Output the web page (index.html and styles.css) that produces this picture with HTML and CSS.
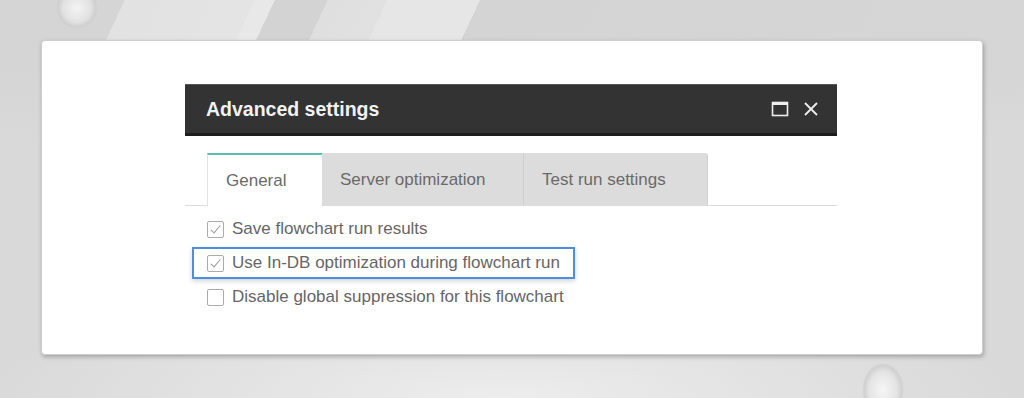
FILE: index.html
```html
<!DOCTYPE html>
<html lang="en">
<head>
  <meta charset="UTF-8" />
  <meta name="viewport" content="width=device-width, initial-scale=1.0"/>
  <title>Advanced settings</title>
  <link rel="stylesheet" href="styles.css">
</head>
<body>

  <div class="card">
    <div class="dialog">
      <div class="dialog-header">
        <h1>Advanced settings</h1>
        <div class="header-icons">
          <svg class="icon" width="18" height="16" viewBox="0 0 18 16">
            <rect x="1.5" y="1.5" width="15" height="13" fill="none" stroke="#eee" stroke-width="1.6"/>
            <rect x="1" y="1" width="16" height="3" fill="#eee"/>
          </svg>
          <svg class="icon" width="16" height="16" viewBox="0 0 16 16">
            <path d="M2 2 L14 14 M14 2 L2 14" stroke="#eee" stroke-width="1.8" fill="none"/>
          </svg>
        </div>
      </div>

      <div class="tabs">
        <div class="tab active">General</div>
        <div class="tab">Server optimization</div>
        <div class="tab">Test run settings</div>
      </div>

      <div class="options">
        <label class="option">
          <span class="box checked"></span>
          Save flowchart run results
        </label>
        <label class="option highlight">
          <span class="box checked"></span>
          Use In-DB optimization during flowchart run
        </label>
        <label class="option">
          <span class="box"></span>
          Disable global suppression for this flowchart
        </label>
      </div>
    </div>
  </div>

</body>
</html>
```

FILE: styles.css
```css
html, body {
  height: 100%;
}

body {
  margin: 0;
  font-family: "Liberation Sans", Arial, sans-serif;
  overflow: hidden;
  background:
    radial-gradient(circle at 77px 8px, #f4f4f4 0, #e2e2e2 14px, #cfcfcf 19px, rgba(210,210,210,0) 21px),
    radial-gradient(ellipse 20px 26px at 883px 390px, #f6f6f6 0, #e4e4e4 14px, #d0d0d0 19px, rgba(210,210,210,0) 21px),
    radial-gradient(ellipse 520px 120px at 500px 398px, rgba(238,238,238,0.95), rgba(238,238,238,0)),
    linear-gradient(to bottom, rgba(216,216,216,0) 0, rgba(216,216,216,0) 70px, #d9d9d9 140px),
    linear-gradient(115deg,
      #d5d5d5 0, #d5d5d5 113px,
      #e2e2e2 113px, #e4e4e4 231px,
      #e8e8e8 231px, #e8e8e8 249px,
      #d3d3d3 249px, #d3d3d3 297px,
      #dfdfdf 297px, #e1e1e1 351px,
      #e6e6e6 351px, #e6e6e6 435px,
      #d4d4d4 435px, #d6d6d6 100%);
}

.card {
  margin: 40px 0 0 41px;
  width: 942px;
  height: 315px;
  box-sizing: border-box;
  background: #fff;
  border-radius: 4px;
  border: 1px solid #cdcdcd;
  box-shadow: 1px 2px 4px rgba(0, 0, 0, 0.25);
  padding: 43px 0 0 143px;
}

.dialog {
  width: 652px;
}

.dialog-header {
  height: 52px;
  box-sizing: border-box;
  background: #333;
  border-top: 1px solid #555;
  border-bottom: 3px solid #1d1d1d;
  display: flex;
  align-items: center;
  justify-content: space-between;
  padding: 0 18px 0 21px;
}

.dialog-header h1 {
  margin: 0;
  color: #f2f2f2;
  font-size: 19.5px;
  font-weight: bold;
}

.header-icons {
  display: flex;
  align-items: center;
  gap: 14px;
}

.icon {
  display: block;
}

.tabs {
  display: flex;
  margin-top: 17px;
  padding-left: 22px;
  border-bottom: 1px solid #dcdcdc;
}

.tab {
  height: 52px;
  box-sizing: border-box;
  display: flex;
  align-items: center;
  font-size: 17px;
  color: #6a6a6a;
  background: #dcdcdc;
  border-top: 2px solid #dcdcdc;
  border-right: 1px solid #cfcfcf;
  padding: 0 18px;
}

.tab:nth-child(2) {
  width: 202px;
}

.tab:nth-child(3) {
  width: 184px;
  border-radius: 0 3px 0 0;
}

.tab.active {
  width: 115px;
  background: #fff;
  border-top-color: #5cbdb3;
  border-left: 1px solid #e2e2e2;
  border-right: none;
  margin-bottom: -1px;
  height: 53px;
}

.options {
  display: flex;
  flex-direction: column;
  align-items: flex-start;
  padding: 7px 0 0 22px;
  gap: 2px;
}

.option {
  height: 32px;
  display: flex;
  align-items: center;
  gap: 8px;
  font-size: 17px;
  color: #666;
}

.option.highlight {
  box-sizing: border-box;
  margin-left: -15px;
  padding: 0 13px;
  border: 2px solid #4a8fe0;
  box-shadow: 0 2px 5px rgba(0, 0, 0, 0.18);
}

.box {
  width: 17px;
  height: 17px;
  box-sizing: border-box;
  border: 1px solid #ababab;
  border-radius: 2px;
  background: #fff;
  position: relative;
}

.box.checked::after {
  content: "";
  position: absolute;
  left: 5px;
  top: 1px;
  width: 4px;
  height: 9px;
  border-right: 1.5px solid #9a9a9a;
  border-bottom: 1.5px solid #9a9a9a;
  transform: rotate(40deg);
}
```
